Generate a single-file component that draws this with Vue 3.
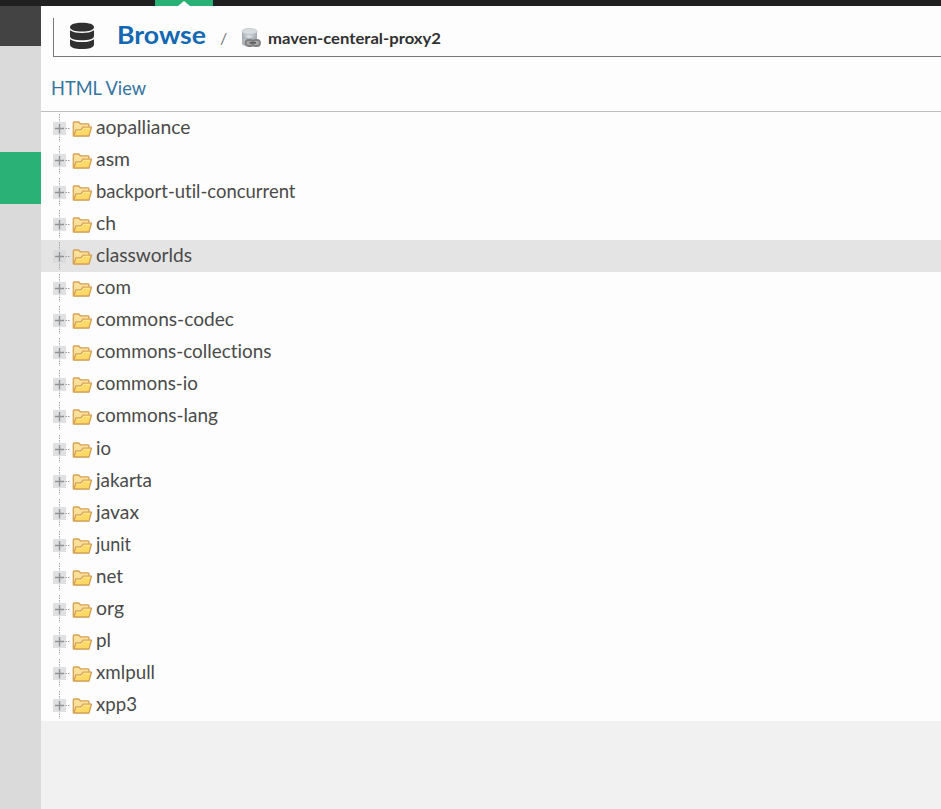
<script setup>
import { ref } from 'vue'

const nodes = [
  { name: 'aopalliance', width: 94.5 },
  { name: 'asm', width: 34 },
  { name: 'backport-util-concurrent', width: 199.5 },
  { name: 'ch', width: 20 },
  { name: 'classworlds', width: 96 },
  { name: 'com', width: 35 },
  { name: 'commons-codec', width: 138 },
  { name: 'commons-collections', width: 175.5 },
  { name: 'commons-io', width: 102 },
  { name: 'commons-lang', width: 122 },
  { name: 'io', width: 15 },
  { name: 'jakarta', width: 56 },
  { name: 'javax', width: 43 },
  { name: 'junit', width: 35 },
  { name: 'net', width: 27 },
  { name: 'org', width: 28 },
  { name: 'pl', width: 15 },
  { name: 'xmlpull', width: 59 },
  { name: 'xpp3', width: 41 },
]
const hovered = ref('classworlds')
</script>

<template>
  <div class="screen">
    <header class="topbar"><div class="tab"><i></i></div></header>
    <div class="body">
      <aside class="side">
        <div class="side-head"></div>
        <div class="side-active"></div>
      </aside>
      <main class="main">
        <div class="crumbs">
          <svg class="db" width="26" height="28" viewBox="0 0 26 28">
            <g fill="#303030">
              <path d="M1 5.200C1 2.300 6 .8 13 .8S25 2.300 25 5.200C25 8 20 9.500 13 9.500S1 8 1 5.200Z" />
              <path d="M1 8.300C4 10.500 8 11 13 11S22 10.500 25 8.300V14C25 17 20 18.200 13 18.200S1 17 1 14Z" />
              <path d="M1 17.200C4 19.400 8 20 13 20S22 19.400 25 17.200V22.500C25 25.600 20 27.100 13 27.100S1 25.600 1 22.500Z" />
            </g>
          </svg>
          <svg class="title" width="90" height="36"><text x="0" y="26" textLength="89" lengthAdjust="spacingAndGlyphs">Browse</text></svg>
          <span class="slash">/</span>
          <svg class="repo" width="20" height="20" viewBox="0 0 20 20">
            <defs>
              <linearGradient id="cyl" x1="0" x2="1"><stop offset="0" stop-color="#a6abb0" /><stop offset=".45" stop-color="#dce1e5" /><stop offset="1" stop-color="#a3a9af" /></linearGradient>
            </defs>
            <path d="M1 3.500V15.500C1 17.500 4 18.300 8.500 18.300S16 17.500 16 15.500V3.500Z" fill="url(#cyl)" />
            <ellipse cx="8.500" cy="3.500" rx="7.500" ry="3" fill="#d8dde1" stroke="#b2b7bc" stroke-width=".7" />
            <path d="M1 9.500Q8 12.500 16 9.500" fill="none" stroke="#a4abb2" />
            <rect x="4.500" y="12" width="8" height="6" rx="3" fill="#aaa" stroke="#808080" stroke-width="1.800" />
            <rect x="11.500" y="12" width="7.500" height="6" rx="3" fill="#aaa" stroke="#808080" stroke-width="1.800" />
            <path d="M8.500 14.800H15" stroke="#606060" stroke-width="1.800" />
          </svg>
          <svg class="repo-name" width="176" height="30"><text x="0" y="21.500" textLength="173" lengthAdjust="spacingAndGlyphs">maven-centeral-proxy2</text></svg>
        </div>
        <div class="toolbar">
          <svg width="100" height="30"><text x="0" y="21" textLength="95" lengthAdjust="spacingAndGlyphs">HTML View</text></svg>
        </div>
        <ul class="tree">
          <li v-for="n in nodes" :key="n.name" :class="{ hover: n.name === hovered }">
            <svg class="elbow" width="18" height="32" viewBox="0 0 18 32">
              <path d="M7.500 2V30" stroke="#a5a5a5" stroke-dasharray="1.500 1" />
              <rect class="box" x="1" y="10" width="13" height="13" />
              <path d="M7.500 12V21.500M3 16.500H12" stroke="#929292" stroke-width="1.400" />
              <path d="M13.500 16.500H17.500" stroke="#a0a0a0" stroke-dasharray="1.500 1" />
            </svg>
            <svg class="folder" width="21" height="18" viewBox="0 0 21 18">
              <path d="M1.300 15.500V3Q1.300 2 2.300 2H6.500L8.500 3.800H16Q17 3.800 17 4.800V7L16.500 15.500Z" fill="#fbe09a" stroke="#d3a157" stroke-width="1.300" />
              <path d="M1.800 16L3.800 10H9L11 7.200H19.500L17 16Z" fill="#ffd966" stroke="#d3a157" stroke-width="1.300" stroke-linejoin="round" />
              <path d="M4.700 11.100H9.500L11.500 8.300H18" fill="none" stroke="#ffeaa0" />
            </svg>
            <svg class="label" :width="n.width + 4" height="32"><text x="0" y="22" :textLength="n.width" lengthAdjust="spacingAndGlyphs">{{ n.name }}</text></svg>
          </li>
        </ul>
      </main>
    </div>
  </div>
</template>

<style>
body { margin: 0; }
</style>
<style scoped>
.screen { width: 941px; height: 809px; display: flex; flex-direction: column; overflow: hidden; background: #f1f1f1; font-family: Lato, "Liberation Sans", sans-serif; font-variant-ligatures: none; }
svg { display: block; flex: none; }
.topbar { height: 6px; flex: none; background: #202020; display: flex; padding-left: 155px; }
.tab { width: 58px; background: #2ab276; display: flex; justify-content: center; align-items: flex-end; }
.tab i { border: 6px solid transparent; border-top: 0; border-bottom: 5px solid #fdfdfd; }
.body { flex: 1; display: flex; min-height: 0; }
.side { width: 41px; flex: none; background: #dadada; }
.side-head { height: 40px; background: #434343; }
.side-active { height: 52px; margin-top: 106px; background: #2ab276; }
.main { flex: 1; min-width: 0; }
.crumbs { height: 51px; box-sizing: border-box; background: linear-gradient(#777, #777) 12px 12px / 1px 39px no-repeat, linear-gradient(#777, #777) 12px 50px / 900px 1px no-repeat, #fdfdfd; display: flex; align-items: flex-start; padding: 0 0 0 28px; }
.db { margin-top: 16px; }
.title { margin: 12px 0 0 22px; }
.title text { font-size: 25px; font-weight: 700; fill: #1268b3; }
.slash { width: 20px; margin-left: 13px; margin-top: 22px; font-size: 16px; line-height: 20px; color: #777; }
.repo { margin: 22px 0 0 1px; }
.repo-name { margin: 16px 0 0 7px; }
.repo-name text { font-size: 16px; font-weight: 700; fill: #303030; }
.toolbar { height: 55px; box-sizing: border-box; border-bottom: 1px solid #bcbcbc; padding: 17px 0 0 10px; background: #fdfdfd; }
.toolbar text { font-size: 19px; fill: #35749f; }
.tree { list-style: none; margin: 0; padding: 0; background: #fdfdfd; height: 609px; display: grid; grid-template-rows: repeat(19, 1fr); }
.tree li { display: flex; align-items: flex-start; padding-left: 11px; min-height: 0; overflow: hidden; }
.hover { background: #e4e4e4; }
.box { fill: #dfe0e2; }
.hover .box { fill: #dadbdc; }
.folder { margin: 8px 0 0 2px; }
.label { margin-left: 3px; overflow: visible; }
.label text { font-size: 19px; fill: #4a4a4a; }
</style>
